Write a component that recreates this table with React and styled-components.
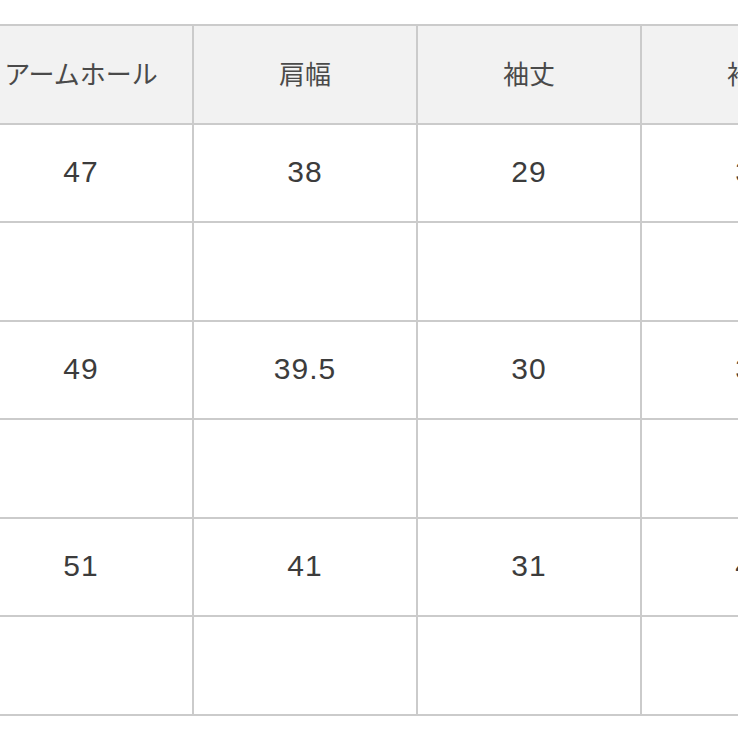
import React from "react";
import styled, { createGlobalStyle } from "styled-components";

const Global = createGlobalStyle`
  html, body {
    margin: 0;
    padding: 0;
    background: #ffffff;
    overflow: hidden;
  }
  body {
    width: 738px;
    height: 738px;
    font-family: "Noto Sans CJK JP", "Noto Sans", sans-serif;
  }
`;

const Page = styled.div`
  width: 738px;
  height: 738px;
  overflow: hidden;
  padding-top: 24px;
  box-sizing: border-box;
`;

const Grid = styled.div`
  display: grid;
  grid-template-columns: repeat(5, 224px);
  grid-auto-rows: 98.57px;
  margin-left: -32px;
  width: max-content;
  border-top: 2px solid #cbcbcb;
  border-left: 2px solid #cbcbcb;
`;

const Cell = styled.div`
  box-sizing: border-box;
  border-right: 2px solid #cbcbcb;
  border-bottom: 2px solid #cbcbcb;
  background: ${(p) => (p.$head ? "#f2f2f2" : "#ffffff")};
  color: ${(p) => (p.$head ? "#4a4a4a" : "#3c3c3c")};
  font-family: ${(p) =>
    p.$head
      ? `"Noto Sans CJK JP", sans-serif`
      : `"Liberation Sans", "Noto Sans CJK JP", sans-serif`};
  font-size: ${(p) => (p.$head ? "26px" : "30px")};
  letter-spacing: ${(p) => (p.$head ? "0" : "1px")};
  padding-bottom: ${(p) => (p.$head ? "4px" : "2px")};
  display: flex;
  align-items: center;
  justify-content: center;
  white-space: nowrap;
  font-weight: 400;
`;

const head = ["アームホール", "肩幅", "袖丈", "袖口", ""];
const rows = [
  ["47", "38", "29", "36", ""],
  ["", "", "", "", ""],
  ["49", "39.5", "30", "38", ""],
  ["", "", "", "", ""],
  ["51", "41", "31", "40", ""],
  ["", "", "", "", ""],
];

export default function App() {
  return (
    <>
      <Global />
      <Page>
        <Grid>
          {head.map((h, i) => (
            <Cell key={"h" + i} $head>
              {h}
            </Cell>
          ))}
          {rows.map((r, ri) =>
            r.map((v, ci) => <Cell key={ri + "-" + ci}>{v}</Cell>)
          )}
        </Grid>
      </Page>
    </>
  );
}
